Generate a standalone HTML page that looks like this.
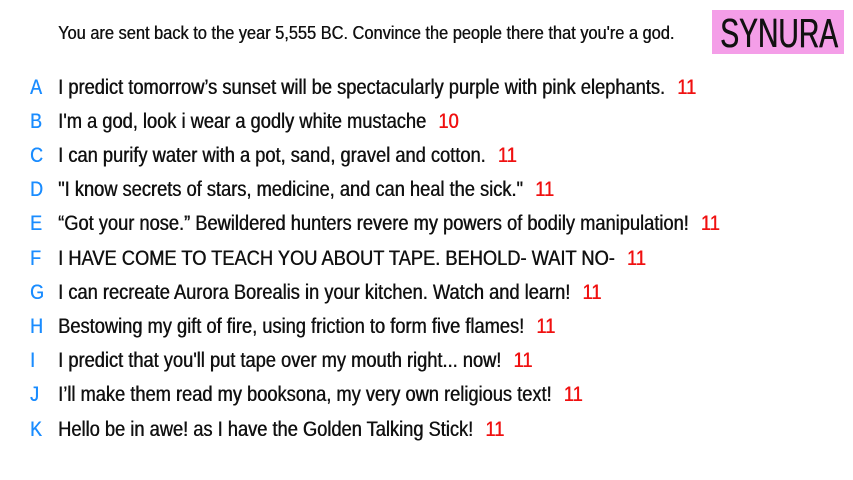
<!DOCTYPE html>
<html><head><meta charset="utf-8"><style>
html,body{margin:0;padding:0;background:#fff;width:853px;height:480px;overflow:hidden;position:relative}
body{font-family:"Liberation Sans",sans-serif;color:#111}
.t{position:absolute;left:58px;top:23px;font-size:18px;white-space:nowrap;transform:scaleX(0.91);transform-origin:left top;text-shadow:0.4px 0 #111}
.logo{position:absolute;left:712px;top:10px;width:132px;height:44px;background:#f49ee8;}
.logo span{position:absolute;left:8px;top:0px;font-size:41px;white-space:nowrap;transform:scaleX(0.69);transform-origin:left top;color:#111;text-shadow:0.7px 0 #111}
.r{position:absolute;left:0;height:30px;white-space:nowrap;font-size:21px}
.l{position:absolute;left:30px;color:#1a8cff;text-shadow:0.5px 0 #1a8cff;transform:scaleX(0.85);transform-origin:left top}
.x{position:absolute;left:58px;transform:scaleX(0.87);transform-origin:left top;text-shadow:0.5px 0 #111}
.n{color:#f01010;text-shadow:0.5px 0 #f01010;margin-left:14px}
</style></head><body>
<div class="t">You are sent back to the year 5,555 BC. Convince the people there that you're a god.</div>
<div class="logo"><span>SYNURA</span></div>
<div class="r" style="top:76px"><span class="l">A</span><span class="x">I predict tomorrow’s sunset will be spectacularly purple with pink elephants.<span class="n">11</span></span></div>
<div class="r" style="top:110px"><span class="l">B</span><span class="x">I'm a god, look i wear a godly white mustache<span class="n">10</span></span></div>
<div class="r" style="top:144px"><span class="l">C</span><span class="x">I can purify water with a pot, sand, gravel and cotton.<span class="n">11</span></span></div>
<div class="r" style="top:178px"><span class="l">D</span><span class="x">"I know secrets of stars, medicine, and can heal the sick."<span class="n">11</span></span></div>
<div class="r" style="top:212px"><span class="l">E</span><span class="x">“Got your nose.” Bewildered hunters revere my powers of bodily manipulation!<span class="n">11</span></span></div>
<div class="r" style="top:247px"><span class="l">F</span><span class="x">I HAVE COME TO TEACH YOU ABOUT TAPE. BEHOLD- WAIT NO-<span class="n">11</span></span></div>
<div class="r" style="top:281px"><span class="l">G</span><span class="x">I can recreate Aurora Borealis in your kitchen. Watch and learn!<span class="n">11</span></span></div>
<div class="r" style="top:315px"><span class="l">H</span><span class="x">Bestowing my gift of fire, using friction to form five flames!<span class="n">11</span></span></div>
<div class="r" style="top:349px"><span class="l">I</span><span class="x">I predict that you'll put tape over my mouth right... now!<span class="n">11</span></span></div>
<div class="r" style="top:383px"><span class="l">J</span><span class="x">I’ll make them read my booksona, my very own religious text!<span class="n">11</span></span></div>
<div class="r" style="top:418px"><span class="l">K</span><span class="x">Hello be in awe! as I have the Golden Talking Stick!<span class="n">11</span></span></div>
</body></html>
